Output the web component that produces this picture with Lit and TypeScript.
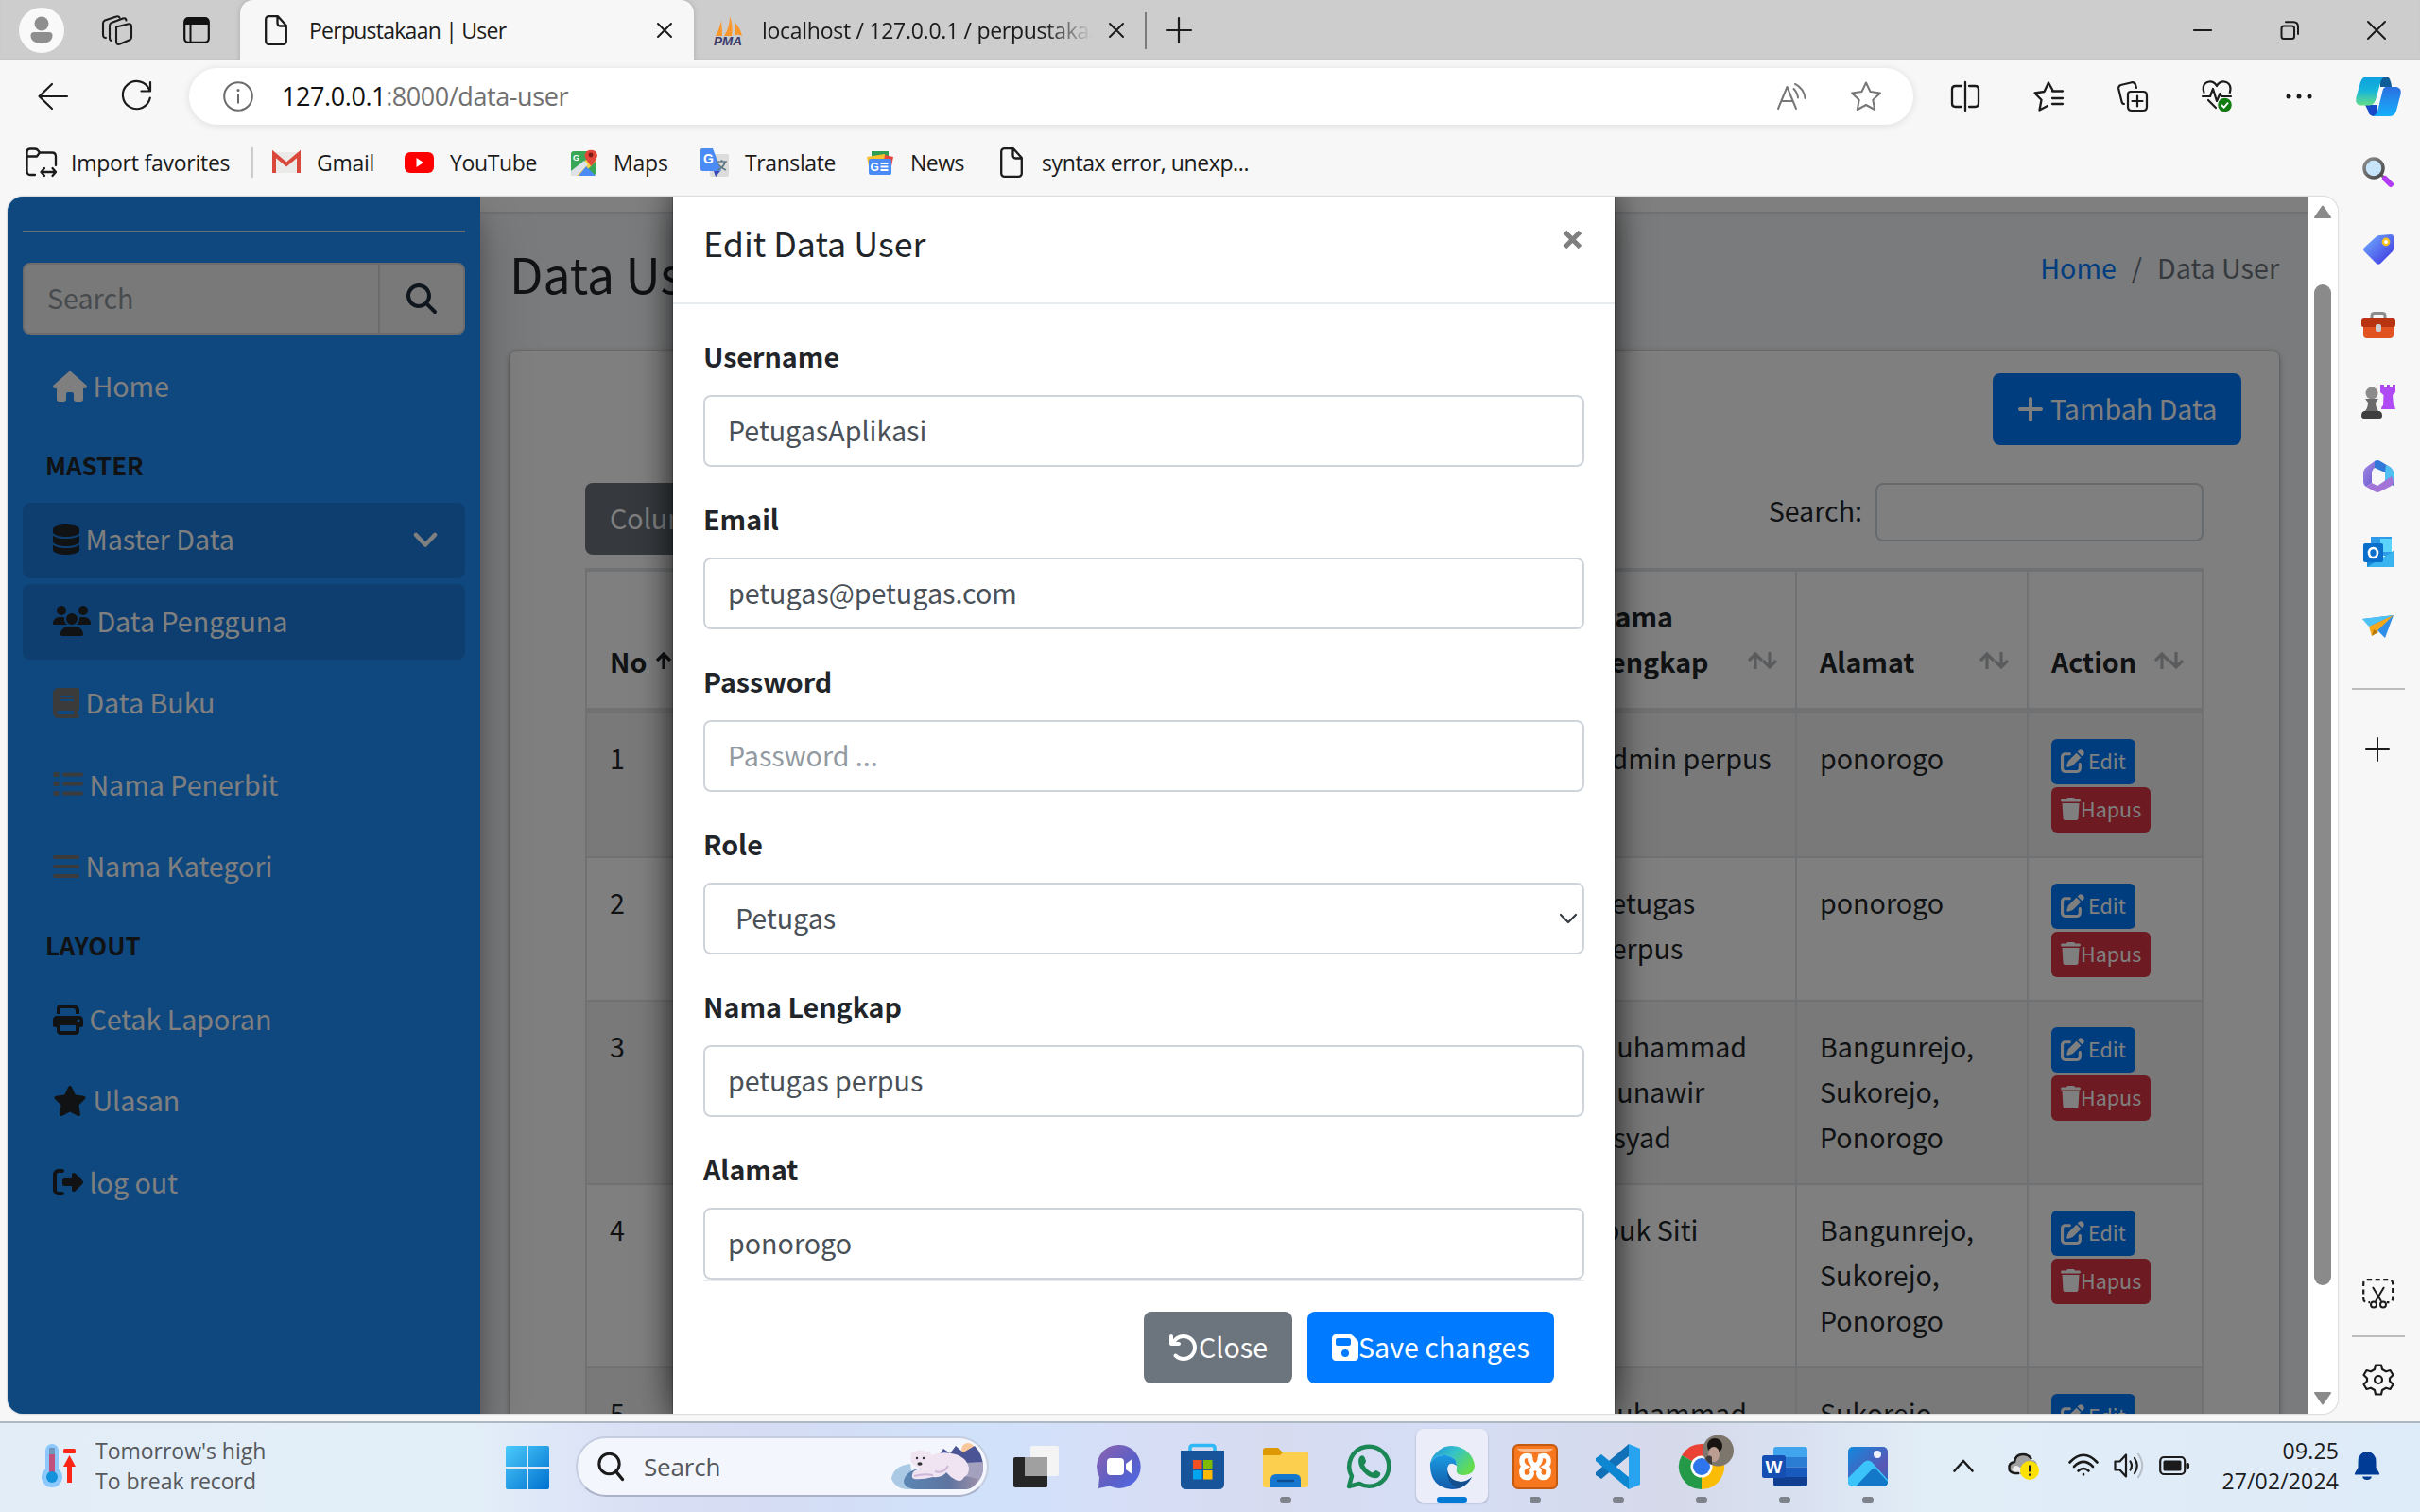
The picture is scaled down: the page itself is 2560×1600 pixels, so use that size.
import { LitElement, html, css, svg } from "lit";
import { customElement } from "lit/decorators.js";
import { classMap } from "lit/directives/class-map.js";

/* ---------- solid icon set (512 unit tall glyph boxes) ---------- */
const FA: Record<string, [number, string]> = {
  search: [512, "M416 208c0 45.9-14.9 88.3-40 122.7L502.6 457.4c12.5 12.5 12.5 32.8 0 45.3s-32.8 12.5-45.3 0L330.7 376c-34.4 25.2-76.8 40-122.7 40C93.1 416 0 322.9 0 208S93.1 0 208 0S416 93.1 416 208zM208 352a144 144 0 1 0 0-288 144 144 0 1 0 0 288z"],
  home: [576, "M575.8 255.5c0 18-15 32.1-32 32.1h-32l.7 160.2c0 2.7-.2 5.4-.5 8.1V472c0 22.1-17.9 40-40 40H456c-1.1 0-2.2 0-3.3-.1c-1.4 .1-2.8 .1-4.2 .1H416 392c-22.1 0-40-17.9-40-40V448 384c0-17.7-14.3-32-32-32H256c-17.7 0-32 14.3-32 32v64 24c0 22.1-17.9 40-40 40H160 128.1c-1.5 0-3-.1-4.5-.2c-1.2 .1-2.4 .2-3.6 .2H104c-22.1 0-40-17.9-40-40V360c0-.9 0-1.9 .1-2.8V287.6H32c-18 0-32-14-32-32.1c0-9 3-17 10-24L266.4 8c7-7 15-8 22-8s15 2 21 7L564.8 231.5c8 7 12 15 11 24z"],
  database: [448, "M448 80v48c0 44.2-100.3 80-224 80S0 172.2 0 128V80C0 35.8 100.3 0 224 0S448 35.8 448 80zM393.2 214.7c20.8-7.4 39.9-16.9 54.8-28.6V288c0 44.2-100.3 80-224 80S0 332.2 0 288V186.1c14.9 11.8 34 21.2 54.8 28.6C99.7 230.7 159.5 240 224 240s124.3-9.3 169.2-25.3zM0 346.1c14.9 11.8 34 21.2 54.8 28.6C99.7 390.7 159.5 400 224 400s124.3-9.3 169.2-25.3c20.8-7.4 39.9-16.9 54.8-28.6V432c0 44.2-100.3 80-224 80S0 476.2 0 432V346.1z"],
  users: [640, "M144 0a80 80 0 1 1 0 160A80 80 0 1 1 144 0zM512 0a80 80 0 1 1 0 160A80 80 0 1 1 512 0zM0 298.7C0 239.8 47.8 192 106.7 192h42.7c15.9 0 31 3.5 44.6 9.7c-1.3 7.2-1.9 14.7-1.9 22.3c0 38.2 16.8 72.5 43.3 96c-.2 0-.4 0-.7 0H21.3C9.6 320 0 310.4 0 298.7zM405.3 320c-.2 0-.4 0-.7 0c26.6-23.5 43.3-57.8 43.3-96c0-7.6-.7-15-1.9-22.3c13.6-6.3 28.7-9.7 44.6-9.7h42.7C592.2 192 640 239.8 640 298.7c0 11.8-9.6 21.3-21.3 21.3H405.3zM224 224a96 96 0 1 1 192 0 96 96 0 1 1 -192 0zM128 485.3C128 411.7 187.7 352 261.3 352H378.7C452.3 352 512 411.7 512 485.3c0 14.7-11.9 26.7-26.7 26.7H154.7c-14.7 0-26.7-11.9-26.7-26.7z"],
  book: [448, "M96 0C43 0 0 43 0 96V416c0 53 43 96 96 96H384h32c17.7 0 32-14.3 32-32s-14.3-32-32-32V384c17.7 0 32-14.3 32-32V32c0-17.7-14.3-32-32-32H384 96zm0 384H352v64H96c-17.7 0-32-14.3-32-32s14.3-32 32-32zm32-240c0-8.8 7.2-16 16-16H336c8.8 0 16 7.2 16 16s-7.2 16-16 16H144c-8.8 0-16-7.2-16-16zm16 48H336c8.8 0 16 7.2 16 16s-7.2 16-16 16H144c-8.8 0-16-7.2-16-16s7.2-16 16-16z"],
  list: [512, "M24 48H88a16 16 0 0 1 16 16v48a16 16 0 0 1-16 16H24a16 16 0 0 1-16-16V64a16 16 0 0 1 16-16zM192 56H480a32 32 0 0 1 0 64H192a32 32 0 0 1 0-64zM24 208H88a16 16 0 0 1 16 16v48a16 16 0 0 1-16 16H24a16 16 0 0 1-16-16V224a16 16 0 0 1 16-16zM192 216H480a32 32 0 0 1 0 64H192a32 32 0 0 1 0-64zM24 368H88a16 16 0 0 1 16 16v48a16 16 0 0 1-16 16H24a16 16 0 0 1-16-16V384a16 16 0 0 1 16-16zM192 376H480a32 32 0 0 1 0 64H192a32 32 0 0 1 0-64z"],
  bars: [448, "M32 64H416a32 32 0 0 1 0 64H32a32 32 0 0 1 0-64zM32 224H416a32 32 0 0 1 0 64H32a32 32 0 0 1 0-64zM32 384H416a32 32 0 0 1 0 64H32a32 32 0 0 1 0-64z"],
  print: [512, "M128 0C92.7 0 64 28.7 64 64v96h64V64H354.7L384 93.3V160h64V93.3c0-17-6.7-33.3-18.7-45.3L400 18.7C388 6.7 371.7 0 354.7 0H128zM384 352v32 64H128V384 368 352H384zm64 32h32c17.7 0 32-14.3 32-32V256c0-35.3-28.7-64-64-64H64c-35.3 0-64 28.7-64 64v96c0 17.7 14.3 32 32 32H64v64c0 35.3 28.7 64 64 64H384c35.3 0 64-28.7 64-64V384zM432 248a24 24 0 1 1 0 48 24 24 0 1 1 0-48z"],
  star: [576, "M316.9 18C311.6 7 300.4 0 288.1 0s-23.4 7-28.8 18L195 150.3 51.4 171.5c-12 1.8-22 10.2-25.7 21.7s-.7 24.2 7.9 32.7L137.8 329 113.2 474.7c-2 12 3 24.2 12.9 31.3s23 8 33.8 2.3l128.3-68.5 128.3 68.5c10.8 5.7 23.9 4.9 33.8-2.3s14.9-19.3 12.9-31.3L438.5 329 542.7 225.9c8.6-8.5 11.7-21.2 7.9-32.7s-13.7-19.9-25.7-21.7L381.2 150.3 316.9 18z"],
  logout: [512, "M377.9 105.9L500.7 228.7c7.2 7.2 11.3 17.1 11.3 27.3s-4.1 20.1-11.3 27.3L377.9 406.1c-6.4 6.4-15 9.9-24 9.9c-18.7 0-33.9-15.2-33.9-33.9l0-62.1-128 0c-17.7 0-32-14.3-32-32l0-64c0-17.7 14.3-32 32-32l128 0 0-62.1c0-18.7 15.2-33.9 33.9-33.9c9 0 17.6 3.6 24 9.9zM160 96L96 96c-17.7 0-32 14.3-32 32l0 256c0 17.7 14.3 32 32 32l64 0c17.7 0 32 14.3 32 32s-14.3 32-32 32l-64 0c-53 0-96-43-96-96L0 128C0 75 43 32 96 32l64 0c17.7 0 32 14.3 32 32s-14.3 32-32 32z"],
  edit: [512, "M471.6 21.7c-21.9-21.9-57.3-21.9-79.2 0L362.3 51.7l97.9 97.9 30.1-30.1c21.9-21.9 21.9-57.3 0-79.2L471.6 21.7zm-299.2 220c-6.1 6.1-10.8 13.6-13.5 21.9l-29.6 88.8c-2.9 8.6-.6 18.1 5.8 24.6s15.9 8.7 24.6 5.8l88.8-29.6c8.2-2.7 15.7-7.4 21.9-13.5L437.7 172.3 339.7 74.3 172.4 241.7zM96 64C43 64 0 107 0 160V416c0 53 43 96 96 96H352c53 0 96-43 96-96V320c0-17.7-14.3-32-32-32s-32 14.3-32 32v96c0 17.7-14.3 32-32 32H96c-17.7 0-32-14.3-32-32V160c0-17.7 14.3-32 32-32h96c17.7 0 32-14.3 32-32s-14.3-32-32-32H96z"],
  trash: [448, "M135.2 17.7L128 32H32C14.3 32 0 46.3 0 64S14.3 96 32 96H416c17.7 0 32-14.3 32-32s-14.3-32-32-32H320l-7.2-14.3C307.4 6.8 296.3 0 284.2 0H163.8c-12.1 0-23.2 6.8-28.6 17.7zM416 128H32L53.2 467c1.6 25.3 22.6 45 47.9 45H346.9c25.3 0 46.3-19.7 47.9-45L416 128z"],
  save: [448, "M64 32C28.7 32 0 60.7 0 96V416c0 35.3 28.7 64 64 64H384c35.3 0 64-28.7 64-64V173.3c0-17-6.7-33.3-18.7-45.3L352 50.7C340 38.7 323.7 32 306.7 32H64zm0 96c0-17.7 14.3-32 32-32H288c17.7 0 32 14.3 32 32v64c0 17.7-14.3 32-32 32H96c-17.7 0-32-14.3-32-32V128zM224 288a64 64 0 1 1 0 128 64 64 0 1 1 0-128z"],
  undo: [512, "M125.7 160H176c17.7 0 32 14.3 32 32s-14.3 32-32 32H48c-17.7 0-32-14.3-32-32V64c0-17.7 14.3-32 32-32s32 14.3 32 32v51.2L97.6 97.6c87.5-87.5 229.3-87.5 316.8 0s87.5 229.3 0 316.8s-229.3 87.5-316.8 0c-12.5-12.5-12.5-32.8 0-45.3s32.8-12.5 45.3 0c62.5 62.5 163.8 62.5 226.3 0s62.5-163.8 0-226.3s-163.8-62.5-226.3 0L125.7 160z"],
  plus: [448, "M256 80c0-17.7-14.3-32-32-32s-32 14.3-32 32V224H48c-17.7 0-32 14.3-32 32s14.3 32 32 32H192V432c0 17.7 14.3 32 32 32s32-14.3 32-32V288H400c17.7 0 32-14.3 32-32s-14.3-32-32-32H256V80z"],
};
const fa = (name: string, h = 32) => {
  const [w, d] = FA[name];
  return html`<svg class="fa" width=${(w * h) / 512} height=${h} viewBox="0 0 ${w} 512"><path fill="currentColor" fill-rule="evenodd" d=${d}/></svg>`;
};
const box = (w: number, h: number, body: unknown, vb = `0 0 ${w} ${h}`) =>
  html`<svg class="ic" width=${w} height=${h} viewBox=${vb} fill="none">${body}</svg>`;
const line = (w: number, h: number, d: string, sw = 2, color = "#1b1b1b") =>
  box(w, h, svg`<path d=${d} stroke=${color} stroke-width=${sw} stroke-linecap="round" stroke-linejoin="round"/>`);

const fileIcon = () => line(24, 32, "M5 1.2H14L22.8 11V27.5A3.3 3.3 0 0 1 19.500 30.800H4.500A3.300 3.300 0 0 1 1.200 27.500V4.500A3.300 3.300 0 0 1 5 1.200ZM13.500 1.500V8.500A3 3 0 0 0 16.500 11.500H22.500", 2.3);
const closeX = (n: number, sw = 2) => line(n, n, `M1 1L${n - 1} ${n - 1}M${n - 1} 1L1 ${n - 1}`, sw);

/* ---------- browser header ---------- */
@customElement("browser-header")
export class BrowserHeader extends LitElement {
  static styles = css`
    :host { display: block; font-family: "Open Sans", "Noto Sans", sans-serif; color: #1b1b1b; }
    svg { display: block; flex: none; overflow: visible; }
    .tabs { display: flex; align-items: center; height: 64px; background: #cdcdcd; box-shadow: inset 0 -2px 2px -1px #b3b3b3; }
    .avatar { width: 48px; height: 48px; margin-left: 20px; }
    .spaces { margin-left: 40px; }
    .vert { margin-left: 54px; }
    .tab { display: flex; align-items: center; box-sizing: border-box; height: 64px; font-size: 23px; white-space: nowrap; line-height: 32px; }
    .active { width: 480px; margin-left: 32px; padding: 0 23px 0 26px; background: #f7f7f7; border-radius: 14px 14px 0 0; box-shadow: 0 0 5px #8888; clip-path: inset(0 -6px 0 -6px); }
    .active .name { flex: 1; margin-left: 23px; letter-spacing: -0.75px; }
    .idle { padding-left: 21px; }
    .idle .name { width: 349px; margin: 0 18px 0 20px; overflow: hidden; letter-spacing: -0.28px; -webkit-mask-image: linear-gradient(90deg, #000 300px, transparent 349px); mask-image: linear-gradient(90deg, #000 300px, transparent 349px); }
    .sep { width: 2px; height: 39px; margin: 0 20px 0 22px; background: #7b7b7b; }
    .win { display: flex; align-items: center; gap: 72px; margin-left: auto; padding-right: 36px; }
    .bar { display: flex; align-items: center; height: 76px; background: #f7f7f7; }
    .back { margin-left: 40px; }
    .reload { margin: 0 40px 0 56px; }
    .address { display: flex; align-items: center; box-sizing: border-box; width: 1824px; height: 60px; padding: 0 34px 0 36px; border-radius: 30px; background: #fff; box-shadow: 0 1px 8px #0000001c; }
    .url { flex: 1; margin-left: 30px; font-size: 27px; line-height: 40px; letter-spacing: -0.42px; color: #707070; }
    .url b { font-weight: 400; color: #111; }
    .star { margin-left: 47px; }
    .tools { display: flex; align-items: center; gap: 57px; margin-left: 40px; }
    .copilot { margin-left: -11px; }
  `;
  render() {
    return html`
      <div class="tabs">
        <div class="avatar">${box(48, 48, svg`<circle cx="24" cy="24" r="24" fill="#f9f9f9"/><circle cx="24" cy="17" r="7.500" fill="#8e8e8e"/><path d="M12.500 29.500Q12.500 26 16 26H32Q35.500 26 35.500 29.500C35.500 35 31 38 24 38S12.500 35 12.500 29.500Z" fill="#8e8e8e"/>`)}</div>
        <div class="spaces">${line(32, 32, "M15 12.500L27 9.500Q31 8.500 31 12V23Q31 25.500 28.500 26.500L19 30.500Q15 32 15 28ZM10 27Q8 27 8 24V11Q8 9 10 8L22 3.500Q25 2.500 25.500 5.500M4 24Q1 24 1 20.500V8.500Q1 6.500 3 5.500L15 1.500Q17.500 .6 18.500 2.500", 2.1)}</div>
        <div class="vert">${box(28, 28, svg`<rect x="1.200" y="1.200" width="25.600" height="25.600" rx="4" stroke="#111" stroke-width="2.200"/><path d="M1 8V5Q1 1 5 1H23Q27 1 27 5V8Z" fill="#111"/><path d="M7.500 8V27" stroke="#111" stroke-width="2"/>`)}</div>
        <div class="tab active">${fileIcon()}<span class="name">Perpustakaan | User</span>${closeX(16)}</div>
        <div class="tab idle">
          ${box(31, 31, svg`<path d="M8 5Q9 14 9 21H2Q6 14 8 5ZM17 0Q21 10 19 21H11Q17 12 17 0ZM22 6Q29 14 30 21Q25 18 22 21Q22 14 22 6Z" fill="#f8982c"/><text x="0" y="30.500" font-family="Liberation Sans" font-style="italic" font-weight="700" font-size="13.500" textLength="30" fill="#3b3b6d">PMA</text>`)}
          <span class="name">localhost / 127.0.0.1 / perpustakaan</span>${closeX(16)}
        </div>
        <div class="sep"></div>
        ${line(28, 28, "M14 1V27M1 14H27", 2.2)}
        <div class="win">
          ${line(20, 20, "M1 10H19", 2.2)}
          ${line(20, 20, "M4 5.500H12.500Q15 5.500 15 8V16.500Q15 19 12.500 19H4Q1.500 19 1.500 16.500V8Q1.500 5.500 4 5.500ZM6 1.200H14Q19 1.200 19 6.500V14", 2)}
          ${closeX(20)}
        </div>
      </div>
      <div class="bar">
        <div class="back">${line(32, 28, "M31 14H1.500M15 1L1.500 14L15 27", 2.2)}</div>
        <div class="reload">${line(32, 32, "M31 1V10.500H21.500M30 9A14.600 14.600 0 1 0 30.800 17.500", 2.2)}</div>
        <div class="address">
          ${box(32, 32, svg`<circle cx="16" cy="16" r="14.800" stroke="#6b6b6b" stroke-width="2"/><path d="M16 14V23.500" stroke="#6b6b6b" stroke-width="2"/><circle cx="16" cy="9.500" r="1.500" fill="#6b6b6b"/>`)}
          <span class="url"><b>127.0.0.1</b>:8000/data-user</span>
          ${line(31, 28, "M1 27L10.500 4L20 27M4.500 19H16.500M17.500 6Q21.500 10 22 15.500M19 .9Q28.500 6 29.500 16", 2, "#777")}
          <div class="star">${line(32, 32, "M16 1.500L20.500 11L31 12.500L23.300 19.800L25.200 30L16 25L6.800 30L8.700 19.800L1 12.500L11.500 11Z", 2, "#777")}</div>
        </div>
        <div class="tools">
          ${line(30, 32, "M15 1V31M11 5H4.500Q1 5 1 8.500V23.500Q1 27 4.500 27H11M19 5H25.500Q29 5 29 8.500V23.500Q29 27 25.500 27H19", 2.3)}
          ${line(32, 32, "M21 10.500L16 1.500L11.500 11L1.500 12.500L8.500 19.800L6.500 30.500L15 26M20 10.500H31M20 18H31M20 24H31", 2.3)}
          ${line(32, 32, "M14 11H27Q31 11 31 15V27Q31 31 27 31H15Q11 31 11 27V14Q11 11 14 11ZM21 15.500V26.500M15.500 21H26.500M7 24Q5 24 4.500 21.500L1.200 8Q.8 5 3.500 4L15 1.200Q18 .8 19 3.500L20 7", 2.2)}
          ${box(32, 34, svg`<path d="M2.500 13Q-.5 3 8 1.500Q13 1 16 6Q19 1 24 1.500Q32.500 3 29.800 13M1 17H9L12 9L16 22L19.500 14L21 17H31M7 21L15 29" stroke="#1b1b1b" stroke-width="2.200" stroke-linecap="round" stroke-linejoin="round"/><circle cx="24.500" cy="26" r="7.300" fill="#107c10"/><path d="M21 26L23.700 28.600L28 23.600" stroke="#fff" stroke-width="1.800"/>`)}
          ${box(28, 32, svg`<circle cx="3" cy="16" r="2.500" fill="#1b1b1b"/><circle cx="14" cy="16" r="2.500" fill="#1b1b1b"/><circle cx="25" cy="16" r="2.500" fill="#1b1b1b"/>`)}
          <div class="copilot">${box(48, 42, svg`
            <defs>
              <linearGradient id="cpa" x1="0" y1="0" x2="0" y2="1"><stop offset="0" stop-color="#0d9fe0"/><stop offset=".5" stop-color="#16b5d8"/><stop offset="1" stop-color="#66dd88"/></linearGradient>
              <linearGradient id="cpb" x1="0" y1="0" x2="0" y2="1"><stop offset="0" stop-color="#2b6fe0"/><stop offset="1" stop-color="#16b0fb"/></linearGradient>
            </defs>
            <path d="M26 0H33Q37 1 38 11H26Z" fill="#0f5c99"/>
            <path d="M10 30H23L22 42H20Q14 42 13 36Z" fill="#1748c8"/>
            <path d="M12 0H32Q27 1 26 7L21 25Q19 30.500 14 30.500H5Q-1 30 .5 22L5 6Q7 0 12 0Z" fill="url(#cpa)"/>
            <path d="M32 11H43Q49 12 47.500 19L43 36Q41 42 36 42H18Q22 41 23.500 35L28 17Q29 11 32 11Z" fill="url(#cpb)"/>`)}</div>
        </div>
      </div>`;
  }
}

/* ---------- favourites row ---------- */
@customElement("favorites-row")
export class FavoritesRow extends LitElement {
  static styles = css`
    :host { display: flex; align-items: center; height: 64px; margin-bottom: 4px; font: 23px/32px "Open Sans", "Noto Sans", sans-serif; color: #1b1b1b; white-space: nowrap; }
    svg { display: block; flex: none; overflow: visible; }
    span { margin-top: -1px; }
    .fav { display: flex; align-items: center; gap: 17px; box-sizing: border-box; flex: none; }
    .import { width: 239px; margin-left: 27px; gap: 15px; letter-spacing: -0.25px; }
    .gmail { width: 162px; height: 32px; padding-left: 20px; border-left: 2px solid #ccc; letter-spacing: -0.3px; }
    .yt { width: 175px; letter-spacing: -0.35px; }
    .maps { width: 138px; letter-spacing: -0.2px; }
    .trans { width: 175px; letter-spacing: -0.4px; }
    .news { width: 142px; letter-spacing: -0.5px; }
    .syntax { gap: 20px; letter-spacing: -0.4px; }
  `;
  render() {
    return html`
      <div class="fav import">${line(33, 32, "M5 1.500H10Q12 1.500 13.500 3.500L15 5.500H28Q32 5.500 32 9.500V19M14.500 6L12 9.500H1.500M10 29H5Q1.500 29 1.500 25V5Q1.500 1.500 5 1.500M17 26H32M20 22L16.500 26L20 30M28.500 22L32 26L28.500 30", 2.3)}<span>Import favorites</span></div>
      <div class="fav gmail">${box(30, 24, svg`<rect x="2" y="1" width="26" height="22" fill="#eceae8"/><path d="M2 23V3L15 14L28 3V23" stroke="#d9483b" stroke-width="4"/>`)}<span>Gmail</span></div>
      <div class="fav yt">${box(31, 24, svg`<rect width="31" height="22" y="1" rx="6" fill="#f00"/><path d="M12.500 7L20 12L12.500 17Z" fill="#fff"/>`)}<span>YouTube</span></div>
      <div class="fav maps">${box(29, 30, svg`<rect x="1" y="3" width="26" height="26" rx="3" fill="#3aa757"/><path d="M1 28L24 5H27V14L12 29H3Z" fill="#f6ce3f"/><path d="M9 29L17 19L27 29Z" fill="#4b8bf5"/><path d="M1 24L15 13L19 17L7 29H3Q1 29 1 26Z" fill="#dfe3e8"/><path d="M22.500 19Q15 10 15.500 7A7 7 0 0 1 29 7Q29 11 22.500 19Z" fill="#e14638"/><circle cx="22" cy="7" r="2.400" fill="#7b1b14"/><text x="3" y="13" font-family="Liberation Sans" font-size="9" font-weight="700" fill="#fff">G</text>`)}<span>Maps</span></div>
      <div class="fav trans">${box(30, 30, svg`<rect x="10" y="6" width="20" height="24" rx="2" fill="#dcdcdc"/><path d="M2 0H13L22 24H2Q0 24 0 22V2Q0 0 2 0Z" fill="#4b8bf5"/><path d="M14 24H21L16 30Z" fill="#3a49b5"/><text x="3" y="16" font-family="Liberation Sans" font-size="14" font-weight="700" fill="#fff">G</text><path d="M17 14H28M22.500 12V14M26 14Q25 20 18 23M19 17Q22 21 27 23" stroke="#607a88" stroke-width="1.600"/>`)}<span>Translate</span></div>
      <div class="fav news">${box(30, 28, svg`<path d="M6 2H24V12H6Z" fill="#2f9e54"/><path d="M1 8L20 5L22 14L3 18Z" fill="#fbc02d"/><path d="M20 6L29 8L27 18H18Z" fill="#e8453c"/><rect x="3" y="10" width="24" height="17" rx="2" fill="#4b8bf5"/><text x="4.500" y="23" font-family="Liberation Sans" font-size="12" font-weight="700" fill="#fff">G</text><path d="M15.500 15H23.500M15.500 18.500H23.500M15.500 22H23.500" stroke="#fff" stroke-width="2"/>`)}<span>News</span></div>
      <div class="fav syntax">${fileIcon()}<span>syntax error, unexp...</span></div>`;
  }
}

/* ---------- right rail ---------- */
@customElement("side-rail")
export class SideRail extends LitElement {
  static styles = css`
    :host { display: flex; flex-direction: column; align-items: center; width: 88px; height: 1364px; }
    svg { display: block; }
    .slot { display: grid; place-items: center; height: 80px; flex: none; }
    .first { height: 84px; }
    .rule { width: 56px; height: 2px; background: #bdbdbd; flex: none; }
    .top { margin-top: 24px; }
    .add { margin-top: 23px; margin-right: 2px; }
    .grow { flex: 1; }
    .shot { height: 88px; }
    .gear { height: 89px; }
  `;
  render() {
    return html`
      <div class="slot first">${box(34, 34, svg`<defs><linearGradient id="m1" x1="0" y1="0" x2="1" y2="1"><stop offset="0" stop-color="#8e8e8e"/><stop offset="1" stop-color="#444"/></linearGradient></defs><path d="M20 20L25 25" stroke="#666" stroke-width="3"/><path d="M24 24L30 30" stroke="#b23cf4" stroke-width="6" stroke-linecap="round"/><circle cx="12" cy="13" r="10" fill="#c6e5fb" stroke="url(#m1)" stroke-width="3.500"/>`)}</div>
      <div class="slot">${box(32, 32, svg`<defs><linearGradient id="t1" x1="0" y1="0" x2="1" y2="1"><stop offset="0" stop-color="#74b4ff"/><stop offset="1" stop-color="#3a2fe0"/></linearGradient></defs><path d="M17 1L29 0Q32 0 32 3V15Q32 17 31 18L18 31Q15 33 13 30L1 18Q-1 16 1 14L13 3Q15 1 17 1Z" fill="url(#t1)"/><circle cx="24" cy="8" r="3.200" fill="#fff" stroke="#f6c21c" stroke-width="2.400"/>`)}</div>
      <div class="slot">${box(36, 28, svg`<path d="M11 8V4Q11 1.500 14 1.500H22Q25 1.500 25 4V8" stroke="#8c8c8c" stroke-width="3"/><path d="M2 14H34V24Q34 28 30 28H6Q2 28 2 24Z" fill="#e0521f"/><path d="M0 10Q0 7 3 7H33Q36 7 36 10V14Q36 16 34 16H2Q0 16 0 14Z" fill="#b83411"/><rect x="15" y="13" width="6" height="8" rx="2" fill="#c9cdd0"/>`)}</div>
      <div class="slot">${box(36, 38, svg`<path d="M20 2H24V5H27V2H30V5H33V2H36V10L33 13L34 24Q36 25 36 28H21Q21 25 23 24L23.500 13L20 10Z" fill="#b04af5"/><circle cx="11" cy="11" r="6.500" fill="#8b8b8b"/><path d="M4 17H18L15 21Q15 27 19 31H3Q7 27 7 21Z" fill="#6a6a6a"/><path d="M0 35Q0 30 4 30H18Q22 30 22 35Q22 38 19 38H3Q0 38 0 35Z" fill="#3e3e3e"/>`)}</div>
      <div class="slot">${box(32, 34, svg`<defs><linearGradient id="o1" x1="0" y1="0" x2="1" y2="1"><stop offset="0" stop-color="#a98be8"/><stop offset="1" stop-color="#5b53c8"/></linearGradient></defs><path d="M12 1L5 6Q0 9 0 14V22Q0 26 3 28L9 24V13Q9 10 12 8L18 4Q16 -1 12 1Z" fill="url(#o1)"/><path d="M12 1Q15 -1 18 1L28 7Q32 10 32 14V27L23 22V13L12 8Z" fill="#3278d8"/><path d="M24 5L28 7Q32 10 32 14V24L23 21V14Z" fill="#4fc0ef"/><path d="M32 22Q32 26 28 28L18 33Q15 35 12 33L3 28L9 24L15 27L24 21L30 17Z" fill="#a274d8"/><circle cx="16" cy="17" r="5.500" fill="#f7f7f7"/>`)}</div>
      <div class="slot">${box(32, 32, svg`<rect x="8" y="0" width="22" height="20" fill="#2f9be8"/><rect x="18" y="2" width="12" height="14" fill="#5ad4fb"/><path d="M4 15L18 24L32 15V32H4Z" fill="#1989d8"/><path d="M4 32L32 15V32Z" fill="#39b4ef"/><rect x="0" y="7" width="21" height="20" rx="2" fill="#0a6fca"/><ellipse cx="10.500" cy="17" rx="4.500" ry="5" stroke="#fff" stroke-width="2.600"/>`)}</div>
      <div class="slot">${box(34, 26, svg`<path d="M0 4L33 0L24 24L17 17Z" fill="#2f8ee8"/><path d="M0 4L33 0L7 12Z" fill="#4fc2f5"/><path d="M33 0L7 12L10 22Z" fill="#f6a81b"/><path d="M10 22L12 15L17 18Z" fill="#b97908"/>`)}</div>
      <div class="rule top"></div>
      <div class="slot add">${line(26, 26, "M13 1V25M1 13H25", 2)}</div>
      <div class="grow"></div>
      <div class="slot shot">${box(34, 32, svg`<rect x="1.200" y="1.200" width="31" height="24" rx="4" stroke="#1b1b1b" stroke-width="2.200" stroke-dasharray="5 3.500"/><rect x="8" y="20" width="18" height="12" fill="#f7f7f7"/><path d="M11 9L20 24M23 9L14 24" stroke="#1b1b1b" stroke-width="2"/><circle cx="12" cy="27.500" r="3" stroke="#1b1b1b" stroke-width="2"/><circle cx="22" cy="27.500" r="3" stroke="#1b1b1b" stroke-width="2"/>`)}</div>
      <div class="rule"></div>
      <div class="slot gear">${line(34, 34, "M14 1.500H20L21 6L25 8.300L29.500 7L32.500 12L29 15.500V18.500L32.500 22L29.500 27L25 25.700L21 28L20 32.500H14L13 28L9 25.700L4.500 27L1.500 22L5 18.500V15.500L1.500 12L4.500 7L9 8.300L13 6ZM17 13A4 4 0 1 0 17 21A4 4 0 1 0 17 13Z", 2.2)}</div>`;
  }
}

/* ---------- web page ---------- */
interface Row { no: string; name: string; address: string; }
const ROWS: Row[] = [
  { no: "1", name: "Admin perpus", address: "ponorogo" },
  { no: "2", name: "Petugas perpus", address: "ponorogo" },
  { no: "3", name: "Muhammad Munawir Irsyad", address: "Bangunrejo, Sukorejo, Ponorogo" },
  { no: "4", name: "Ibuk Siti", address: "Bangunrejo, Sukorejo, Ponorogo" },
  { no: "5", name: "Muhammad", address: "Sukorejo," },
];
const FIELDS = [
  { label: "Username", value: "PetugasAplikasi" },
  { label: "Email", value: "petugas@petugas.com" },
  { label: "Password", value: "Password ...", kind: "hint" },
  { label: "Role", value: "Petugas", kind: "select" },
  { label: "Nama Lengkap", value: "petugas perpus" },
  { label: "Alamat", value: "ponorogo" },
];

@customElement("user-page")
export class UserPage extends LitElement {
  static styles = css`
    :host { display: flex; position: relative; box-sizing: border-box; width: 2465px; height: 1288px; margin-left: 8px; border-radius: 16px; overflow: hidden; background: #fff; box-shadow: 0 0 2px #999; font: 28.65px/48px "Noto Sans CJK JP", "Noto Sans", sans-serif; color: #212529; }
    svg { display: block; flex: none; }
    .t { position: relative; top: -1px; }
    .menu { box-sizing: border-box; width: 500px; height: 1288px; padding: 36px 16px 0; background: #1e90ff; color: #fff; z-index: 1; box-shadow: 0 28px 56px rgba(0,0,0,.25), 0 20px 20px rgba(0,0,0,.22); }
    .rule { height: 2px; background: #dee2e6; margin-bottom: 32px; }
    .find { display: flex; box-sizing: border-box; height: 76px; margin-bottom: 16px; border: 2px solid #d9d9d9; border-radius: 8px; background: #f2f2f2; color: #8f969d; align-items: center; }
    .find .t { flex: 1; padding-left: 24px; }
    .find .go { display: grid; place-items: center; width: 88px; height: 72px; border-left: 2px solid #d9d9d9; color: #1f2d3d; }
    .item { display: flex; align-items: center; gap: 6.4px; box-sizing: border-box; height: 80px; margin-bottom: 6.4px; padding: 0 29px 0 32px; border-radius: 8px; }
    .item .t { flex: 1; top: -1.6px; }
    .item .fa { margin-top: -2px; }
    .item.on { background: rgba(0,0,0,.13); }
    .dark .fa { color: #212529; }
    .mid .fa { color: #777; }
    .head { height: 48px; padding: 12px 0 15.6px 24px; font-size: 25.8px; font-weight: 700; color: #212529; }
    .main { flex: none; width: 1934px; background: #f4f6f9; }
    .strip { height: 16px; background: #fff; border-bottom: 2px solid #dee2e6; }
    .title { display: flex; justify-content: space-between; align-items: flex-start; height: 145px; padding: 0 31px 0 31px; }
    .title .h1 { font-size: 51.6px; line-height: 70px; margin-top: 28px; }
    .crumb { display: flex; gap: 16px; margin-top: 33px; color: #6c757d; }
    .crumb .link { color: #007bff; }
    .card { width: 1872px; height: 1300px; margin-left: 31px; background: #fff; border-radius: 8px; box-shadow: 0 0 2px rgba(0,0,0,.25), 0 2px 6px rgba(0,0,0,.3); }
    .actions { display: flex; justify-content: flex-end; padding: 24px 40px 0 0; }
    .btn { display: flex; align-items: center; box-sizing: border-box; height: 76px; border-radius: 8px; color: #fff; }
    .add { width: 263px; padding-left: 26px; gap: 7px; background: #007bff; }
    .filter { display: flex; justify-content: space-between; align-items: flex-start; height: 90px; padding: 40px 80px 0; }
    .cols { width: 300px; padding-left: 26px; background: #6c757d; }
    .lookup { display: flex; align-items: flex-start; gap: 14px; line-height: 58px; }
    .lookup i { box-sizing: border-box; width: 347px; height: 62px; border: 2px solid #ced4da; border-radius: 8px; }
    .table { margin: 0 80px; border-right: 2px solid #dee2e6; width: 1710px; }
    .row { display: grid; grid-template-columns: 122px 920px 238px 245px 185px; min-height: 152px; box-sizing: border-box; border-bottom: 2px solid #dee2e6; }
    .row:nth-child(2) { min-height: 153px; }
    .row > div { border-left: 2px solid #dee2e6; padding: 24px 16px 24px 24px; }
    .row > div.covered { padding: 0; }
    .stripe { background: #f2f2f2; }
    .thead { min-height: 0; height: 154px; border-top: 4px solid #dee2e6; border-bottom: 6px solid #dee2e6; font-weight: 700; align-items: stretch; }
    .thead > div { display: flex; align-items: flex-end; justify-content: space-between; padding: 0 18px 25px 24px; }
    .thead .lead { justify-content: flex-start; gap: 9px; }
    .thead svg { margin-bottom: 16px; }
    .mini { display: flex; align-items: center; box-sizing: border-box; width: fit-content; height: 48px; padding: 0 10px; border-radius: 6px; font-size: 21.5px; color: #fff; }
    .mini.edit { width: 89px; margin: 3px 0 3px; gap: 4px; background: #007bff; }
    .mini.del { width: 105px; background: #dc3545; }
    .mini .fa { margin-top: -2px; }
    .row > div.acts { padding-bottom: 0; }
    .scroll { display: flex; flex-direction: column; align-items: center; box-sizing: border-box; flex: 1; height: 1288px; padding: 9px 1px 9px 0; background: #fff; position: relative; z-index: 4; }
    .thumb { width: 18px; height: 1059px; margin-top: 70px; margin-bottom: auto; border-radius: 9px; background: #8a8a8a; }
    .shade { position: absolute; inset: 0 31px 0 0; background: rgba(0,0,0,.5); z-index: 2; }
    .modal { position: absolute; left: 704px; top: 0; width: 996px; height: 1288px; box-sizing: border-box; background: #fff; z-index: 3; box-shadow: 0 16px 32px rgba(0,0,0,.5), 0 0 0 1px rgba(0,0,0,.2), 0 -20px 32px rgba(0,0,0,.4); }
    .mhead { display: flex; justify-content: space-between; box-sizing: border-box; height: 114px; padding: 18px 34px 0 32px; border-bottom: 2px solid #e9ecef; font-size: 35.8px; line-height: 60px; }
    .mhead svg { margin-top: 17px; }
    .form { padding: 32px 32px 0; }
    .fields { display: grid; row-gap: 32px; }
    .label { margin-bottom: 16px; font-weight: 700; }
    .input { display: flex; align-items: center; justify-content: space-between; box-sizing: border-box; height: 76px; padding: 0 5px 0 24px; border: 2px solid #ced4da; border-radius: 8px; color: #495057; }
    .hint { color: #939ba2; }
    .select { padding-left: 32px; }
    .foot { display: flex; justify-content: flex-end; gap: 16px; padding: 32px 32px 0 0; border-top: 2px solid #e9ecef; }
    .close { width: 157px; padding-left: 26px; background: #6c757d; }
    .savebtn { width: 261px; padding-left: 26px; background: #007bff; }
  `;
  private item(icon: string, text: string, tone = "", on = false) {
    return html`<div class=${classMap({ item: true, on, dark: tone === "dark", mid: tone === "mid" })}>${fa(icon)}<span class="t">${text}</span>${text === "Master Data" ? box(26, 18, svg`<path d="M3 3L13 13.500L23 3" stroke="#fff" stroke-width="4.500" stroke-linecap="round" stroke-linejoin="round"/>`) : ""}</div>`;
  }
  private sort() {
    return box(33, 18, svg`<path d="M9 18V2.500M2 9L9 2L16 9M24 0V15.500M17 9L24 16L31 9" stroke="#b5b7b9" stroke-width="3.200"/>`);
  }
  render() {
    return html`
      <div class="menu">
        <div class="rule"></div>
        <div class="find"><span class="t">Search</span><span class="go">${fa("search")}</span></div>
        ${this.item("home", "Home")}
        <div class="head">MASTER</div>
        ${this.item("database", "Master Data", "dark", true)}
        ${this.item("users", "Data Pengguna", "dark", true)}
        ${this.item("book", "Data Buku", "mid")}
        ${this.item("list", "Nama Penerbit", "mid")}
        ${this.item("bars", "Nama Kategori", "mid")}
        <div class="head">LAYOUT</div>
        ${this.item("print", "Cetak Laporan", "dark")}
        ${this.item("star", "Ulasan", "dark")}
        ${this.item("logout", "log out", "dark")}
      </div>
      <div class="main">
        <div class="strip"></div>
        <div class="title"><div class="h1">Data User</div><div class="crumb"><span class="link">Home</span><span>/</span><span>Data User</span></div></div>
        <div class="card">
          <div class="actions"><div class="btn add">${fa("plus")}<span class="t">Tambah Data</span></div></div>
          <div class="filter"><div class="btn cols"><span class="t">Column</span></div><div class="lookup"><span>Search:</span><i></i></div></div>
          <div class="table">
            <div class="row thead">
              <div class="lead"><span>No</span>${box(18, 18, svg`<path d="M9 18V2.500M2 9L9 2L16 9" stroke="#212529" stroke-width="3.200"/>`)}</div>
              <div class="covered"></div>
              <div><span>Nama<br>Lengkap</span>${this.sort()}</div>
              <div><span>Alamat</span>${this.sort()}</div>
              <div><span>Action</span>${this.sort()}</div>
            </div>
            ${ROWS.map((r, i) => html`
              <div class=${classMap({ row: true, stripe: i % 2 === 0 })}>
                <div><span class="t">${r.no}</span></div>
                <div class="covered"></div>
                <div><span class="t">${r.name}</span></div>
                <div><span class="t">${r.address}</span></div>
                <div class="acts"><div class="mini edit">${fa("edit", 25)}<span class="t">Edit</span></div><div class="mini del">${fa("trash", 24)}<span class="t">Hapus</span></div></div>
              </div>`)}
          </div>
        </div>
      </div>
      <div class="scroll">
        ${box(18, 14, svg`<path d="M9 1.500L17 13H1Z" fill="#8a8a8a" stroke="#8a8a8a" stroke-width="2" stroke-linejoin="round"/>`)}
        <div class="thumb"></div>
        ${box(18, 14, svg`<path d="M9 12.500L17 1H1Z" fill="#8a8a8a" stroke="#8a8a8a" stroke-width="2" stroke-linejoin="round"/>`)}
      </div>
      <div class="shade"></div>
      <div class="modal">
        <div class="mhead"><span>Edit Data User</span>${box(21, 21, svg`<path d="M2.500 2.500L18.500 18.500M18.500 2.500L2.500 18.500" stroke="#7f7f7f" stroke-width="5"/>`)}</div>
        <div class="form">
          <div class="fields">
            ${FIELDS.map((f) => html`
              <div>
                <div class="label"><span class="t">${f.label}</span></div>
                <div class=${classMap({ input: true, hint: f.kind === "hint", select: f.kind === "select" })}><span class="t">${f.value}</span>${f.kind === "select" ? line(20, 12, "M2 2L10 10L18 2", 2.2, "#343a40") : ""}</div>
              </div>`)}
          </div>
          <div class="foot"><div class="btn close">${fa("undo")}<span class="t">Close</span></div><div class="btn savebtn">${fa("save")}<span class="t">Save changes</span></div></div>
        </div>
      </div>`;
  }
}

/* ---------- taskbar ---------- */
const APPS: { art: unknown; state?: string }[] = [
  { art: svg`<rect x="18" y="2" width="30" height="32" rx="2" fill="#f4f4f4"/><rect x="0" y="14" width="36" height="32" rx="2" fill="#262626"/><rect x="12" y="14" width="24" height="20" fill="#a0a0a0"/>` },
  { art: svg`<defs><linearGradient id="ch" x1="0" y1="0" x2="1" y2="1"><stop offset="0" stop-color="#8d63b0"/><stop offset=".6" stop-color="#5b5fc7"/><stop offset="1" stop-color="#4f6bed"/></linearGradient></defs><path d="M24 1A22.500 23 0 1 1 14 44.500L2 47L3 35A22.500 23 0 0 1 24 1Z" fill="url(#ch)"/><rect x="11" y="15" width="18" height="18" rx="4" fill="#fff"/><path d="M31 21L37 16.500V31.500L31 27Z" fill="#fff"/>` },
  { art: svg`<path d="M11 10V4Q11 1.500 14 1.500H34Q37 1.500 37 4V10" stroke="#2fb8f5" stroke-width="3.500"/><path d="M1 7H47V42Q47 48 41 48H7Q1 48 1 42Z" fill="#17549a"/><rect x="14" y="17" width="9.500" height="9.500" fill="#f25022"/><rect x="25" y="17" width="9.500" height="9.500" fill="#7fba00"/><rect x="14" y="28" width="9.500" height="9.500" fill="#00a4ef"/><rect x="25" y="28" width="9.500" height="9.500" fill="#ffb900"/>` },
  { art: svg`<path d="M0 7Q0 4 3 4H16L21 9H46Q48 9 48 11V20H0Z" fill="#dd9a06"/><path d="M0 12H18L21 9H46Q48 9 48 11V43Q48 46 45 46H3Q0 46 0 43Z" fill="#fcd04e"/><path d="M8 46V38Q8 32 14 32H34Q40 32 40 38V46Z" fill="#1677cf"/><path d="M15 39H33" stroke="#0b4d92" stroke-width="2.500"/>`, state: "run" },
  { art: svg`<path d="M3 45L6 34A21 21 0 1 1 14 42Z" stroke="#1b8755" stroke-width="4.500" stroke-linejoin="round"/><path d="M15 13Q18 11 19.500 14L21 18Q21 20 19 22Q22 28 28 30.500Q30 28 32 28L36 30.500Q37 33 34 35.500Q30 38 22 33Q13 26 13 18Q13 15 15 13Z" fill="#1b8755"/>` },
  { art: svg`<defs><linearGradient id="e1" x1="0" y1="0" x2="1" y2=".6"><stop offset="0" stop-color="#1d8fe0"/><stop offset=".5" stop-color="#35c3c8"/><stop offset="1" stop-color="#64dc4c"/></linearGradient><linearGradient id="e2" x1="0" y1="0" x2="0" y2="1"><stop offset="0" stop-color="#1b9be3"/><stop offset="1" stop-color="#1259a8"/></linearGradient></defs><path d="M1 20A24 24 0 0 1 48 23Q48 32 37 33Q27 33 29 26Q30 14 18 12Q7 11 1 20Z" fill="url(#e1)"/><path d="M1 20Q7 11 18 12Q29 14 29 23Q20 17 19 27Q20 39 33 40Q40 40 45 35Q38 48 24 48Q0 46 1 20Z" fill="url(#e2)"/><path d="M19 27Q18 40 29 47Q40 45 45 35Q40 40 33 40Q21 39 19 27Z" fill="#134f8e"/>`, state: "focus" },
  { art: svg`<rect x="1" y="1" width="46" height="46" rx="5" fill="#f6771d" stroke="#c45a10" stroke-width="2"/><path d="M5 5H43Q41 8 36 8H12Q7 8 5 5Z" fill="#f9b98b"/><path d="M18 13Q10 11 10 18Q10 22 13 24Q9 26 10 31Q11 37 18 35Q21 33 20 28L28 20Q31 14 27 13M30 13Q38 11 38 18Q38 22 35 24Q39 26 38 31Q37 37 30 35Q27 33 28 28L20 20Q17 14 21 13" stroke="#fff" stroke-width="5.500"/>`, state: "run" },
  { art: svg`<path d="M35 0L47 5V43L35 48L33 30V16Z" fill="#27a3f0"/><path d="M35 0V13L6 37L0 33V30Z" fill="#1070b8"/><path d="M35 48V35L6 11L0 15V18Z" fill="#0f86d1"/><path d="M35 13V35L22 24Z" fill="#d7dbec"/>`, state: "run" },
  { art: svg`<path d="M24 24L3.200 12A24 24 0 0 1 44.800 12Z" fill="#ea4335"/><path d="M24 24L44.800 12A24 24 0 0 1 24 48Z" fill="#fbbc05"/><path d="M24 24L24 48A24 24 0 0 1 3.200 12Z" fill="#249a48"/><circle cx="24" cy="24" r="11.500" fill="#fff"/><circle cx="24" cy="24" r="9" fill="#2f76ee"/><circle cx="41.500" cy="7" r="16.500" fill="#7d766c"/><ellipse cx="38" cy="2" rx="8" ry="8" fill="#171412"/><ellipse cx="37" cy="11" rx="6" ry="8" fill="#bb9d92"/><path d="M28 15Q32 10 35 14V22Q30 20 28 15Z" fill="#413c3a"/>`, state: "run" },
  { art: svg`<path d="M12 6Q12 3 15 3H45Q48 3 48 6V14H12Z" fill="#41a5ee"/><rect x="12" y="14" width="36" height="10.500" fill="#2b7cd3"/><rect x="12" y="24.500" width="36" height="10.500" fill="#185abd"/><path d="M12 35H48V42Q48 45 45 45H15Q12 45 12 42Z" fill="#103f91"/><rect x="0" y="12" width="25" height="24" rx="2.500" fill="#164fb3"/><text x="3.500" y="31" font-family="Liberation Sans" font-weight="700" font-size="19" textLength="18" fill="#fff">W</text>`, state: "run" },
  { art: svg`<defs><linearGradient id="p1" x1="0" y1="0" x2="1" y2="1"><stop offset="0" stop-color="#1289dd"/><stop offset=".7" stop-color="#5a55b5"/><stop offset="1" stop-color="#1c72c4"/></linearGradient></defs><rect x="3" y="3" width="42" height="42" rx="5" fill="url(#p1)"/><path d="M3 36L20 19Q24 16 28 19L45 38V40Q45 45 40 45H8Q3 45 3 40Z" fill="#3ac4fa"/><path d="M11 45L28 27Q31 24 34 28L45 40Q45 45 40 45Z" fill="#1478c9"/><circle cx="34" cy="11" r="4" fill="#f1f1fa"/>`, state: "run" },
];

@customElement("task-bar")
export class TaskBar extends LitElement {
  static styles = css`
    :host { display: flex; box-sizing: border-box; height: 96px; border-top: 2px solid #aeb8c2; font: 23px/32px "Open Sans", "Noto Sans", sans-serif; color: #1b1b1b; background: linear-gradient(90deg, #e2edf7 0, #e2eef8 500px, #dbe2f6 640px, #d5dcf3 800px, #d0e1fa 1030px, #d6def6 1200px, #d6dbf0 1350px, #d5def6 1520px, #d5d9ea 1760px, #d9e1f0 1900px, #e1edf7 2040px, #deebf8 2560px); }
    svg { display: block; flex: none; overflow: visible; }
    .weather { display: flex; align-items: center; box-sizing: border-box; gap: 19px; width: 535px; padding-left: 44px; height: 90px; color: #55585c; letter-spacing: -0.02px; }
    .start { display: flex; align-items: center; width: 74px; height: 94px; }
    .find { display: flex; align-items: center; box-sizing: border-box; width: 437px; height: 64px; margin-top: 14px; padding: 0 1px 0 21px; border: 2px solid #c5cde0; border-bottom-color: #abb2c8; border-radius: 32px; background: #f3f6fd; font-size: 26px; color: #55585c; overflow: hidden; }
    .find span { flex: 1; margin-left: 21px; letter-spacing: -0.2px; }
    .apps { display: grid; grid-template-columns: repeat(11, 88px); margin-left: 6px; }
    .app { display: flex; flex-direction: column; align-items: center; box-sizing: border-box; width: 76px; height: 78px; margin: 6px auto 0; padding-top: 16px; border-radius: 8px; }
    .app::after { content: ""; width: 12px; height: 6px; margin-top: 8px; border-radius: 3px; background: transparent; }
    .run::after { background: #7d828b; }
    .focus { background: #ebeef9; box-shadow: 0 1px 2px #9aa0b8; }
    .focus::after { width: 32px; background: #0078d4; }
    .tray { display: flex; align-items: center; margin-left: 46px; height: 90px; }
    .cloud { margin-left: 36px; }
    .wifi { margin-left: 32px; }
    .net { margin-left: 16px; }
    .clock { width: 158px; text-align: right; height: 64px; letter-spacing: 0.15px; color: #1b1b1b; }
    .bell { margin-left: 17px; }
  `;
  render() {
    return html`
      <div class="weather">
        ${box(38, 48, svg`<rect x="4" y="1" width="14" height="32" rx="7" fill="#8cc8fb"/><circle cx="11" cy="36" r="11" fill="#8cc8fb"/><rect x="8" y="11" width="6" height="22" fill="#c2507c"/><rect x="8" y="5" width="6" height="7" fill="#6f97bd"/><circle cx="11" cy="36" r="6" fill="#1293dc"/><rect x="23" y="6" width="13" height="5" rx="1.500" fill="#fb2516"/><path d="M29.500 13L36 25H32V42H27V25H23Z" fill="#fb2516"/>`)}
        <div>Tomorrow's high<br>To break record</div>
      </div>
      <div class="start">${box(46, 46, svg`<defs><linearGradient id="w" x1="0" y1="0" x2="1" y2="1"><stop offset="0" stop-color="#4bcbfb"/><stop offset="1" stop-color="#0070cf"/></linearGradient></defs><path d="M2 0H22V22H0V2Q0 0 2 0ZM24 0H44Q46 0 46 2V22H24ZM0 24H22V46H2Q0 46 0 44ZM24 24H46V44Q46 46 44 46H24Z" fill="url(#w)"/>`)}</div>
      <div class="find">
        ${box(28, 32, svg`<circle cx="12.500" cy="13" r="10.700" stroke="#1b1b1b" stroke-width="3"/><path d="M19.500 21L26.500 29.500" stroke="#1b1b1b" stroke-width="3.500" stroke-linecap="round"/>`)}
        <span>Search</span>
        ${box(100, 50, svg`
          <defs><linearGradient id="ice" x1="0" y1="0" x2="1" y2="0"><stop offset="0" stop-color="#5a86b4"/><stop offset=".6" stop-color="#5e74a0"/><stop offset="1" stop-color="#9a8fa8"/></linearGradient></defs>
          <circle cx="81" cy="7" r="7" fill="#f8c79b"/>
          <path d="M44 22L55 6L62 11L68 3L76 10L88 3Q97 12 97 26L60 30Z" fill="#4b5596"/>
          <path d="M60 22L97 20V30Q95 40 86 46H60Z" fill="#a3a1bd"/>
          <path d="M0 38Q2 24 20 22L24 49H16Q4 48 0 38Z" fill="#a9c9e4"/>
          <path d="M13 40Q16 28 34 26L92 38Q88 48 80 49H26Q13 48 13 40Z" fill="url(#ice)"/>
          <path d="M22 34Q22 29 30 27Q18 22 21 14Q19 9 24 9Q30 6 37 9Q42 7 42 13Q54 8 68 12Q80 16 82 26Q82 34 77 36Q74 42 68 39Q62 36 58 31Q54 37 44 36Q32 39 24 38Q21 37 22 34Z" fill="#f0e4f3"/>
          <path d="M46 30Q55 33 60 24M24 35Q34 32 44 34" stroke="#cdb6d8" stroke-width="2"/>
          <circle cx="27" cy="16" r="1.200" fill="#333"/><circle cx="34" cy="16" r="1.200" fill="#333"/><ellipse cx="30" cy="22" rx="2.600" ry="1.800" fill="#333"/>`)}
      </div>
      <div class="apps">${APPS.map((a) => html`<div class=${classMap({ app: true, run: a.state === "run", focus: a.state === "focus" })}>${box(48, 48, a.art)}</div>`)}</div>
      <div class="tray">
        ${line(22, 14, "M1.500 12.500L11 2L20.500 12.500", 2.6)}
        <div class="cloud">${box(32, 30, svg`<path d="M11 24H7Q1 23 1 17.500Q1 12 7 11Q8 3 16 3Q22 3 25 9Q30 9 31 14Q31 20 28 23Z" fill="#a1a1a1"/><path d="M4 19Q8 12 13 17L20 22H7Z" fill="#ececec"/><path d="M12 23H7Q1 22 1.500 17.500Q1 12 7 11Q8 3 16 3Q22 3 25 8" stroke="#1b1b1b" stroke-width="2.400"/><circle cx="23" cy="20" r="10" fill="#fce100"/><path d="M23 14.500V21.500M23 23.500V25.800" stroke="#222" stroke-width="2"/>`)}</div>
        <div class="wifi">${line(32, 26, "M1.500 9.500Q16 -6 30.500 9.500M6 14Q16 4 26 14M10.500 18.500Q16 13.500 21.500 18.500M16 22V22.500", 2.6)}</div>
        <div class="net">${box(32, 28, svg`<path d="M1.500 9.500H6.500L13 2.500V25.500L6.500 18.500H1.500ZM17.500 9.500Q20.500 14 17.500 18.500M22 6Q27.500 14 22 22" stroke="#1b1b1b" stroke-width="2.200" stroke-linecap="round" stroke-linejoin="round"/><path d="M25.500 1Q35 14 25.500 27" stroke="#b7bfc8" stroke-width="2"/>`)}</div>
        <div class="net">${box(32, 22, svg`<rect x="1.200" y="2" width="26" height="18" rx="4" stroke="#1b1b1b" stroke-width="2.200"/><rect x="4.500" y="5.500" width="19" height="11" rx="1.500" fill="#1b1b1b"/><rect x="28.500" y="8" width="3.500" height="6" rx="1.500" fill="#1b1b1b"/>`)}</div>
        <div class="clock">09.25<br>27/02/2024</div>
        <div class="bell">${box(26, 30, svg`<path d="M13 0Q22.500 1 22.500 11V17L26 23V24.500H0V23L3.500 17V11Q3.500 1 13 0ZM8 26.500H18Q17 30 13 30T8 26.500Z" fill="#003c96"/>`)}</div>
      </div>`;
  }
}

@customElement("app-root")
export class AppRoot extends LitElement {
  static styles = css`
    :host { display: block; width: 2560px; height: 1600px; overflow: hidden; background: #f7f7f7; }
    .body { display: flex; height: 1364px; }
    .left { width: 2472px; }
  `;
  render() {
    return html`
      <browser-header></browser-header>
      <div class="body">
        <div class="left"><favorites-row></favorites-row><user-page></user-page></div>
        <side-rail></side-rail>
      </div>
      <task-bar></task-bar>`;
  }
}
